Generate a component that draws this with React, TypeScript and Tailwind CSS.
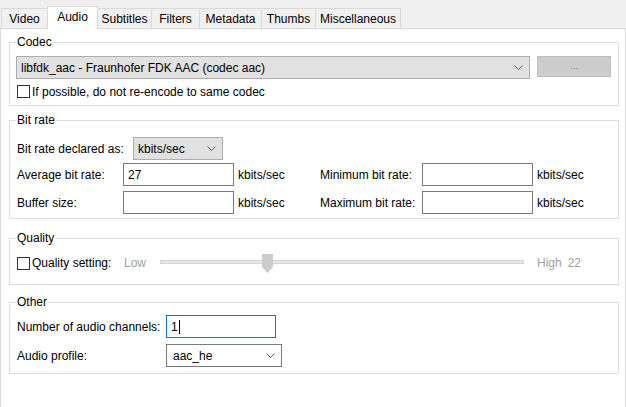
const tabs = [
  { name: 'Video', w: 'w-[47px]' },
  { name: 'Audio', w: 'w-[51px]', active: true },
  { name: 'Subtitles', w: 'w-[55px]' },
  { name: 'Filters', w: 'w-[49px]' },
  { name: 'Metadata', w: 'w-[63px]' },
  { name: 'Thumbs', w: 'w-[55px]' },
  { name: 'Miscellaneous', w: 'w-[86px]' },
];

function Chevron() {
  return (
    <svg width="9" height="5" viewBox="0 0 9 5" className="shrink-0">
      <path d="M0.5 0.5 L4.5 4.5 L8.5 0.5" stroke="#606060" strokeWidth="1" fill="none" />
    </svg>
  );
}

function Checkbox() {
  return <span className="w-[13px] h-[13px] border border-[#333333] bg-white shrink-0" />;
}

function TextBox({ value, focused, w }: { value?: string; focused?: boolean; w: string }) {
  return (
    <div
      className={`${w} h-[23px] border bg-white flex items-center pl-[4px] shrink-0 ${
        focused ? 'border-[#0078d7]' : 'border-[#7a7a7a]'
      }`}
    >
      {value}
      {focused && <span className="w-px h-[14px] bg-black ml-px" />}
    </div>
  );
}

function Group({ title, className, children }: { title: string; className: string; children: React.ReactNode }) {
  return (
    <fieldset className={`w-[610px] border border-[#dcdcdc] px-[6px] ${className}`}>
      <legend className="px-px leading-[14px]">{title}</legend>
      {children}
    </fieldset>
  );
}

export default function App() {
  return (
    <div className="w-[626px] h-[407px] bg-[#f0f0f0] flex flex-col text-[12px] text-black font-['Liberation_Sans',Arial,sans-serif] overflow-hidden">
      {/* Tab strip */}
      <div className="h-[28px] flex items-end pl-px shrink-0">
        {tabs.map((t) =>
          t.active ? (
            <div
              key={t.name}
              className={`${t.w} h-[23px] -mb-px -ml-px relative z-10 bg-white border border-b-0 border-[#d9d9d9] flex items-center justify-center pb-[3px]`}
            >
              {t.name}
            </div>
          ) : (
            <div
              key={t.name}
              className={`${t.w} h-[20px] -ml-px first:ml-0 border border-b-0 border-[#d9d9d9] flex items-center justify-center`}
            >
              {t.name}
            </div>
          )
        )}
      </div>

      {/* Tab page */}
      <div className="flex-1 bg-white border border-b-0 border-[#d9d9d9] pl-[8px] pr-[6px]">
        <Group title="Codec" className="mt-[6px] pb-[7px]">
          <div className="flex items-start mt-[7px]">
            <div className="w-[514px] h-[23px] bg-[#e1e1e1] border border-[#adadad] flex items-center justify-between pl-[4px] pr-[6px]">
              <span>libfdk_aac - Fraunhofer FDK AAC (codec aac)</span>
              <Chevron />
            </div>
            <div className="ml-[7px] w-[74px] h-[21px] bg-[#cccccc] border border-[#bfbfbf] flex items-center justify-center text-[9px] text-[#8a8a8a]">
              ...
            </div>
          </div>
          <div className="flex items-center h-[13px] mt-[6px] ml-px">
            <Checkbox />
            <span className="ml-[2px]">If possible, do not re-encode to same codec</span>
          </div>
        </Group>

        <Group title="Bit rate" className="mt-[7px] pb-[4px]">
          <div className="flex items-center mt-[10px] ml-px">
            <span className="w-[116px]">Bit rate declared as:</span>
            <div className="w-[90px] h-[23px] bg-[#e1e1e1] border border-[#adadad] flex items-center justify-between pl-[4px] pr-[6px]">
              <span>kbits/sec</span>
              <Chevron />
            </div>
          </div>
          <div className="flex items-center mt-[3px] ml-px">
            <span className="w-[106px]">Average bit rate:</span>
            <TextBox w="w-[111px]" value="27" />
            <span className="ml-[4px] w-[82px]">kbits/sec</span>
            <span className="w-[102px]">Minimum bit rate:</span>
            <TextBox w="w-[111px]" />
            <span className="ml-[4px]">kbits/sec</span>
          </div>
          <div className="flex items-center mt-[5px] ml-px">
            <span className="w-[106px]">Buffer size:</span>
            <TextBox w="w-[111px]" />
            <span className="ml-[4px] w-[82px]">kbits/sec</span>
            <span className="w-[102px]">Maximum bit rate:</span>
            <TextBox w="w-[111px]" />
            <span className="ml-[4px]">kbits/sec</span>
          </div>
        </Group>

        <Group title="Quality" className="mt-[12px] pb-[11px]">
          <div className="flex items-center h-[20px] mt-[8px] ml-px">
            <Checkbox />
            <span className="ml-[2px] w-[92px]">Quality setting:</span>
            <span className="w-[36px] text-[#a0a0a0]">Low</span>
            <div className="relative w-[364px] h-[20px]">
              <div className="absolute left-0 right-0 top-[7px] h-[4px] bg-[#e7e7e7] border border-[#d6d6d6]" />
              <svg width="11" height="19" viewBox="0 0 11 19" className="absolute left-[102px] top-px">
                <path d="M0 0 H11 V13 L5.5 19 L0 13 Z" fill="#cccccc" />
              </svg>
            </div>
            <span className="ml-[13px] text-[#a0a0a0]">High</span>
            <span className="ml-[6px] text-[#a0a0a0]">22</span>
          </div>
        </Group>

        <Group title="Other" className="mt-[10px] pb-[6px]">
          <div className="flex items-center mt-[6px] ml-px">
            <span className="w-[149px]">Number of audio channels:</span>
            <TextBox w="w-[110px]" value="1" focused />
          </div>
          <div className="flex items-center mt-[6px] ml-px">
            <span className="w-[149px]">Audio profile:</span>
            <div className="w-[116px] h-[23px] bg-white border border-[#7a7a7a] flex items-center justify-between pl-[6px] pr-[6px]">
              <span>aac_he</span>
              <Chevron />
            </div>
          </div>
        </Group>
      </div>
    </div>
  );
}
